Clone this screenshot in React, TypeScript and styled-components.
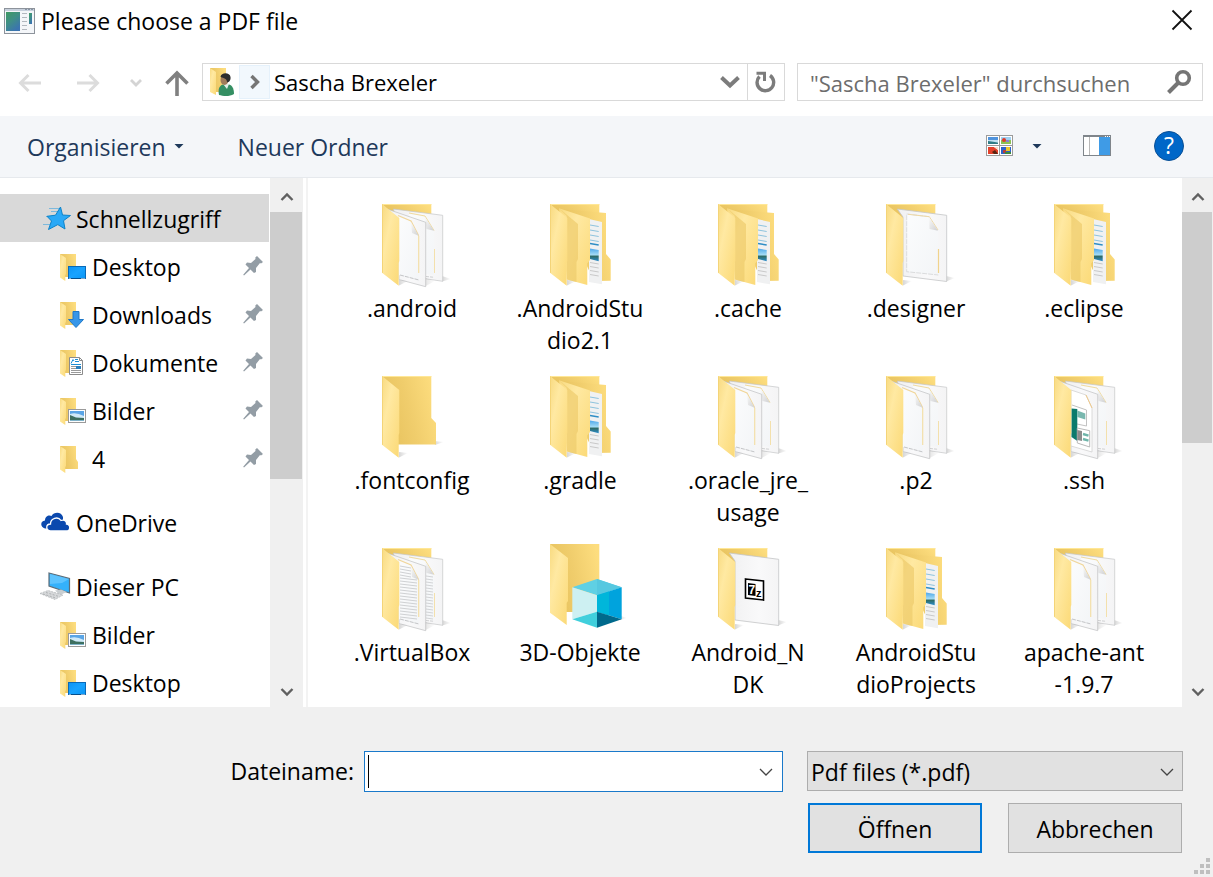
import React from "react";
import styled, { createGlobalStyle } from "styled-components";

const GlobalStyle = createGlobalStyle`
  *, *::before, *::after { box-sizing: border-box; }
  body { margin: 0; background: #fff; }
  body, button, input, select {
    font-family: "Open Sans", "Noto Sans", sans-serif;
    font-size: 23px;
    line-height: 32px;
    color: #000;
  }
  button { border: 0; padding: 0; background: none; }
  svg { display: block; flex: none; overflow: visible; }
`;

/* ---------- layout parts ---------- */

const Dialog = styled.div`
  min-height: 100vh;
  display: flex;
  flex-direction: column;
  overflow: hidden;
`;

const TitleBar = styled.header`
  display: flex;
  align-items: center;
  height: 42px;
  padding: 0 20px 0 4px;
  gap: 6px;
`;

const Title = styled.h1`
  flex: 1;
  margin: 0;
  font-size: 23px;
  font-weight: 400;
`;

const IconButton = styled.button<{ $width?: number; $before?: number }>`
  display: flex;
  flex: none;
  align-items: center;
  justify-content: center;
  width: ${(p) => (p.$width ? `${p.$width}px` : "auto")};
  height: 36px;
  margin-left: ${(p) => p.$before ?? 0}px;
`;

const NavBar = styled.nav`
  display: flex;
  align-items: center;
  height: 74px;
  padding: 6px 10px 0 16px;
`;

const HistoryButtons = styled.div`
  flex: none;
  display: flex;
  align-items: center;
  width: 186px;
  padding: 2px 0 0 2px;
`;

const AddressBar = styled.div`
  flex: 581 1 0;
  min-width: 0;
  display: flex;
  align-items: center;
  height: 38px;
  border: 1px solid #d9d9d9;
  margin-right: 12px;
`;

const UserFolderSlot = styled.span`
  width: 36px;
  padding-left: 6px;
`;

const CrumbArrow = styled.button`
  display: flex;
  align-items: center;
  justify-content: center;
  width: 31px;
  height: 34px;
  background: #f2f8fd;
  border: 1px solid #e5f1fb;
`;

const Crumb = styled.button`
  flex: 1;
  min-width: 0;
  padding-left: 4px;
  font-size: 22px;
  text-align: left;
  white-space: nowrap;
`;

const RefreshButton = styled(IconButton)`
  border-left: 1px solid #d9d9d9;
`;

const SearchBox = styled.div`
  flex: 382 1 0;
  min-width: 0;
  display: flex;
  align-items: center;
  height: 38px;
  padding: 0 10px 0 12px;
  border: 1px solid #d9d9d9;
`;

const SearchInput = styled.input`
  flex: 1;
  min-width: 0;
  height: 34px;
  padding: 2px 0 0;
  border: 0;
  outline: 0;
  background: transparent;
  font-size: 22px;
  &::placeholder { color: #6d6d6d; opacity: 1; }
`;

const Toolbar = styled.div`
  display: flex;
  align-items: center;
  height: 62px;
  padding: 0 29px 0 27px;
  background: #f4f6f9;
  border-bottom: 1px solid #e6e9ed;
`;

const Command = styled.button`
  display: flex;
  align-items: center;
  gap: 8px;
  margin-right: 54px;
  color: #1e395b;
  white-space: nowrap;
`;

const ToolbarTools = styled.div`
  display: flex;
  align-items: center;
  margin-left: auto;
  padding-bottom: 2px;
`;

const Body = styled.div`
  flex: 1;
  display: flex;
  align-items: stretch;
  min-height: 0;
`;

const Sidebar = styled.nav`
  flex: none;
  width: 270px;
  padding: 16px 1px 0 0;
`;

const Group = styled.ul`
  list-style: none;
  margin: 0 0 16px;
  padding: 0;
  &:last-child { margin-bottom: 0; }
`;

const SideItem = styled.button<{ $nested?: boolean; $selected?: boolean }>`
  display: flex;
  align-items: center;
  gap: 4px;
  width: 100%;
  height: 48px;
  padding: 0 6px 0 ${(p) => (p.$nested ? 56 : 40)}px;
  background: ${(p) => (p.$selected ? "#d9d9d9" : "transparent")};
  text-align: left;
`;

const SideLabel = styled.span`
  flex: 1;
  padding-top: 2px;
`;

const ScrollColumn = styled.div<{ $width: number }>`
  flex: none;
  display: flex;
  flex-direction: column;
  width: ${(p) => p.$width}px;
  background: #f0f0f0;
`;

const ScrollArrow = styled.button`
  display: flex;
  align-items: center;
  justify-content: center;
  height: 34px;
  padding-top: 3px;
`;

const ScrollTrack = styled.div`
  flex: 1;
`;

const ScrollThumb = styled.div<{ $share: number }>`
  height: ${(p) => p.$share}%;
  margin-right: 1px;
  background: #cdcdcd;
`;

const Splitter = styled.div`
  flex: none;
  width: 5px;
  border-right: 2px solid #f3f3f3;
`;

const FileArea = styled.main`
  flex: 1;
  min-width: 0;
  padding: 18px 14px 5px 20px;
`;

const FileGrid = styled.ul`
  list-style: none;
  margin: 0;
  padding: 0;
  display: grid;
  grid-template-columns: repeat(auto-fill, 168px);
  row-gap: 12px;
`;

const FileTile = styled.button`
  display: flex;
  flex-direction: column;
  align-items: center;
  width: 168px;
  height: 160px;
`;

const FileName = styled.span`
  white-space: pre;
  text-align: center;
`;

const Footer = styled.footer`
  background: #f0f0f0;
`;

const FooterForm = styled.form`
  display: grid;
  grid-template-columns: 354px minmax(0, 1fr) 376px;
  row-gap: 11px;
  padding: 44px 30px 0 0;
`;

const FieldLabel = styled.label`
  text-align: right;
  line-height: 41px;
`;

const ComboBox = styled.div`
  display: flex;
  align-items: center;
  height: 41px;
  margin: 0 24px 0 10px;
  padding-left: 3px;
  background: #fff;
  border: 1px solid #1a79ca;
`;

const TextCaret = styled.span`
  width: 1px;
  height: 33px;
  background: #000;
`;

const NameInput = styled.input`
  flex: 1;
  min-width: 0;
  height: 36px;
  padding: 0 2px;
  border: 0;
  outline: 0;
  background: transparent;
`;

const SelectWrap = styled.div`
  position: relative;
  height: 40px;
`;

const TypeSelect = styled.select`
  appearance: none;
  width: 100%;
  height: 40px;
  padding: 2px 40px 0 3px;
  background: #e1e1e1;
  border: 1px solid #adadad;
  border-radius: 0;
`;

const SelectArrow = styled.span`
  position: absolute;
  right: 8px;
  top: 14px;
  pointer-events: none;
`;

const Actions = styled.div`
  grid-column: 3;
  display: grid;
  grid-template-columns: 1fr 1fr;
  gap: 26px;
  padding: 0 1px;
`;

const ActionButton = styled.button<{ $primary?: boolean }>`
  height: 50px;
  padding-top: 2px;
  background: #e1e1e1;
  border: ${(p) => (p.$primary ? "2px solid #0078d7" : "1px solid #adadad")};
`;

const GripRow = styled.div`
  display: flex;
  justify-content: flex-end;
  padding: 5px 3px 3px;
`;

/* ---------- shared gradients ---------- */

const GradientSheet = styled.svg`
  position: absolute;
`;

const Gradients = () => (
  <GradientSheet width="0" height="0" aria-hidden="true">
    <defs>
      <linearGradient id="leaf" x1="0" y1="0" x2="1" y2="1">
        <stop offset="0" stopColor="#f8da80" />
        <stop offset="0.35" stopColor="#ffe9a2" />
        <stop offset="1" stopColor="#fbd976" />
      </linearGradient>
      <linearGradient id="back" x1="0" y1="0.6" x2="1" y2="0.3">
        <stop offset="0" stopColor="#e6c15c" />
        <stop offset="0.5" stopColor="#f0cd6c" />
        <stop offset="1" stopColor="#fddd7e" />
      </linearGradient>
      <linearGradient id="paper" x1="0" y1="0" x2="1" y2="0">
        <stop offset="0" stopColor="#f0f0f1" />
        <stop offset="0.6" stopColor="#f9f9fa" />
        <stop offset="1" stopColor="#f4f4f5" />
      </linearGradient>
      <linearGradient id="sheet" x1="0" y1="0" x2="1" y2="1">
        <stop offset="0" stopColor="#fbfcfd" />
        <stop offset="1" stopColor="#f3f5f7" />
      </linearGradient>
      <linearGradient id="fold" x1="0" y1="0" x2="1" y2="1">
        <stop offset="0" stopColor="#fafafa" />
        <stop offset="1" stopColor="#cfd0d2" />
      </linearGradient>
      <linearGradient id="photo" x1="0" y1="0" x2="0" y2="1">
        <stop offset="0" stopColor="#4fa8ea" />
        <stop offset="0.5" stopColor="#a5dcf5" />
        <stop offset="0.6" stopColor="#2f6a63" />
        <stop offset="1" stopColor="#2b8fd0" />
      </linearGradient>
      <linearGradient id="screen" x1="0" y1="0" x2="1" y2="1">
        <stop offset="0" stopColor="#0d94f4" />
        <stop offset="0.5" stopColor="#19a3ff" />
        <stop offset="1" stopColor="#0a96f5" />
      </linearGradient>
      <linearGradient id="app" x1="0" y1="0" x2="0.6" y2="1">
        <stop offset="0" stopColor="#3f9a63" />
        <stop offset="0.5" stopColor="#3f8f86" />
        <stop offset="1" stopColor="#3b74b0" />
      </linearGradient>
      <linearGradient id="shade" x1="0" y1="0" x2="1" y2="0">
        <stop offset="0" stopColor="#8a8a8a" stopOpacity="0.35" />
        <stop offset="1" stopColor="#8a8a8a" stopOpacity="0" />
      </linearGradient>
    </defs>
  </GradientSheet>
);

/* ---------- large folder icons ---------- */

type FolderKind = "papers" | "text" | "nested" | "single" | "empty" | "cube" | "zip" | "keys";

const FrontLeaf = () => (
  <>
    <path d="M35 84 L44 85 L35 89.5Z" fill="url(#shade)" />
    <path d="M18 8 L35.3 22 V65 L34.7 67 V89.7 L18 76.7Z" fill="url(#leaf)" />
    <path d="M18.5 8.5V76.8" stroke="#f4d478" strokeWidth="1" />
  </>
);

const BackPanel = () => (
  <>
    <path d="M18 8 H67.3 V22 H30Z" fill="url(#back)" />
    <path d="M18 8.5 H67.3" stroke="#ffe796" strokeWidth="1" />
  </>
);

const Lines = ({ x, y, w, count, gap, color, skew = 2 }: { x: number; y: number; w: number; count: number; gap: number; color: string; skew?: number }) => (
  <>
    {Array.from({ length: count }, (_, i) => (
      <path key={i} d={`M${x} ${y + i * gap} l${w} ${skew}`} stroke={color} strokeWidth="1" fill="none" />
    ))}
  </>
);

const Papers = ({ kind }: { kind: FolderKind }) => (
  <>
    <path d="M78 80 L87 83 L78 85.5Z" fill="url(#shade)" />
    <path d="M29.3 13 L78.7 19.3 V85.3 L50 81Z" fill="url(#paper)" stroke="#c4c5c7" strokeWidth="0.7" />
    <path d="M45 18 L61 20 L70 34 V79 L55 77Z" fill="url(#sheet)" />
    <path d="M45 17 L61 20 L70 34.5" stroke="#f0dba0" strokeWidth="1" fill="none" />
    <path d="M61 21 L62.5 33 L70 34.7Z" fill="url(#fold)" />
    <path d="M70.5 53 V77" stroke="#f3e0ac" strokeWidth="1" />
    <path d="M62 80.5 l8 0.8" stroke="#cfd0d2" strokeWidth="1" strokeDasharray="3 1" />
    {kind === "text" && <Lines x={62} y={36} w={7} count={15} gap={3} color="#d2d4d6" skew={1} />}
    <path d="M21 12.3 L61.7 26.3 V90.7 L35 83.5 V23Z" fill="url(#paper)" stroke="#bfc0c2" strokeWidth="0.7" />
    <path d="M61.7 82 L71 85 L61.7 90Z" fill="url(#shade)" opacity="0.6" />
    {kind === "keys" ? (
      <>
        <path d="M35 22 L50 27 L56 40 V84 L35 78Z" fill="#fff" stroke="#d2d2d2" strokeWidth="0.8" />
        <path d="M50 27 L56 40" stroke="#efc98a" strokeWidth="1" />
        <path d="M36 37 L50.5 42 V58 L41 56" fill="none" stroke="#c2c2c2" strokeWidth="1" />
        <path d="M35.5 40.5 L41.3 41 V73 L35.5 69Z" fill="#0b7a6c" />
        <path d="M41.3 42.5 L49.3 45.5 V51.5 L41.3 49Z" fill="#79b8af" />
        <path d="M41.3 60 L53.7 62.7 V79 L41.3 75Z" fill="#fff" stroke="#b9b9b9" strokeWidth="1" />
        <path d="M41.3 62 L46 63 V73 L41.3 72Z" fill="#8c8c8c" />
        <path d="M47 66 l5.5 1.6 M47 71 l5.5 1.6" stroke="#6fb5aa" strokeWidth="2.4" />
      </>
    ) : (
      <>
        <path d="M35 21 L47 25 L54.7 39.7 V85 L35 79Z" fill="url(#sheet)" />
        {kind === "text" && <Lines x={36} y={26} w={11} count={4} gap={3} color="#cfd1d3" />}
        {kind === "text" && <Lines x={36} y={38} w={17} count={14} gap={3} color="#cfd1d3" />}
        <path d="M34 19.5 L47 25 L54.7 39.7" stroke="#f0d69a" strokeWidth="1.2" fill="none" />
        <path d="M47 26 L48 37 L54.7 39.7Z" fill="url(#fold)" />
        <path d="M54.7 40 V77" stroke="#f3dfa8" strokeWidth="1.2" />
        <path d="M36 79 L55 84" stroke="#c4c5c7" strokeWidth="1" strokeDasharray="4 1" />
      </>
    )}
  </>
);

const NestedFolder = () => (
  <>
    <path d="M28 13 L74 17 V58 L78.7 63.5 V84.7 L62 85Z" fill="url(#back)" />
    <path d="M57 23 L70 26 V88.3 L57 86Z" fill="#f0f1f2" />
    <Lines x={58} y={29} w={8.7} count={4} gap={5} color="#8ec3dd" skew={1.5} />
    <path d="M58 47.5 l8.7 1.5" stroke="#2f8ec6" strokeWidth="1.6" />
    <path d="M58 52.5 L66.7 54 V65.3 L58 63Z" fill="url(#photo)" />
    <Lines x={58} y={66.5} w={8.7} count={4} gap={4} color="#c9c9c9" skew={1.5} />
    <path d="M27 12.3 L58 22.5 V64 L55.3 67.3 V89 L35 83.5Z" fill="url(#leaf)" />
    <path d="M27 12.3 L46 28 V63 L44.5 66 V86 L34.7 83.5 V20Z" fill="#ecca68" opacity="0.65" />
  </>
);

const SinglePaper = ({ kind }: { kind: FolderKind }) => (
  <>
    <path d="M78 80 L87 82 L78 85.5Z" fill="url(#shade)" />
    <path d="M29.3 13 L78.7 19.3 V85.5 L35 80V21Z" fill="url(#paper)" stroke="#c4c5c7" strokeWidth="0.8" />
    {kind === "single" ? (
      <>
        <path d="M38.7 18 L61.3 20.7 L70.3 34.7 V79 L38.7 75.7Z" fill="url(#sheet)" />
        <path d="M61.300 20.700 L38.700 18 V75.700 L70.300 79" stroke="#d3d4d6" strokeWidth="0.8" strokeDasharray="5 1" />
        <path d="M40 18.3 L61.3 20.7 L70 34" stroke="#eed9a6" strokeWidth="1" fill="none" />
        <path d="M61 21 L61.5 33 L70 34.7Z" fill="url(#fold)" />
        <path d="M70.5 53 V77" stroke="#f0d38c" strokeWidth="1.2" />
      </>
    ) : (
      <>
        <path d="M45.5 39 L63.5 41 V60 L45.5 58Z" fill="#fff" stroke="#000" strokeWidth="1.6" />
        <path d="M48 43 L55.5 44 V56 L48 55Z" fill="#000" />
        <text x="48.6" y="54.4" fontSize="12" fontWeight="700" fill="#fff" fontFamily="Liberation Sans, sans-serif">7</text>
        <text x="56" y="56.5" fontSize="11" fontWeight="700" fill="#000" fontFamily="Liberation Sans, sans-serif">z</text>
      </>
    )}
  </>
);

const FolderIcon = ({ kind }: { kind: FolderKind }) => (
  <svg width="96" height="96" viewBox="0 0 96 96" fill="none" aria-hidden="true">
    {kind === "cube" ? (
      <>
        <path d="M18 4 H67.3 V72 H34Z" fill="url(#back)" />
        <path d="M18 4 L36 18 V61 L34.7 63 V85 L18 72.7Z" fill="url(#leaf)" />
        <path d="M86 75 L95 78 L88 80Z" fill="url(#shade)" />
        <path d="M65 39 L89.7 47.3 L65 55.3 L40.3 47.3Z" fill="#5fd0e4" />
        <path d="M65 39 L89.7 47.3 L65 55.3Z" fill="#56c8e0" />
        <path d="M40.3 47.3 L65 55.3 V71.7 L40.3 79.3Z" fill="#cdf0f2" />
        <path d="M65 55.3 L89.7 47.3 V79.3 L65 71.7Z" fill="#00a3dd" />
        <path d="M65 55.3 L77 51.4 V75.4 L65 71.7Z" fill="#00b6da" />
        <path d="M65 71.7 V87.7 L40.3 79.3Z" fill="#40cfdc" />
        <path d="M65 71.7 L89.7 79.3 L65 87.7Z" fill="#00698c" />
      </>
    ) : kind === "empty" ? (
      <>
        <path d="M70 73 L80 74 L71 77Z" fill="url(#shade)" />
        <path d="M18 8 H67.3 V50 L72 55 V76.5 H34Z" fill="url(#back)" />
        <path d="M18 8.5 H67.3" stroke="#ffe796" />
        <FrontLeaf />
      </>
    ) : (
      <>
        <BackPanel />
        {kind === "nested" ? <NestedFolder /> : kind === "single" || kind === "zip" ? <SinglePaper kind={kind} /> : <Papers kind={kind} />}
        <FrontLeaf />
      </>
    )}
  </svg>
);

/* ---------- sidebar icons ---------- */

type SideKind = "star" | "desktop" | "downloads" | "documents" | "pictures" | "folder" | "cloud" | "pc";

const SideIcon = ({ kind }: { kind: SideKind }) => {
  if (kind === "star")
    return (
      <svg width="32" height="32" viewBox="0 0 32 32" fill="none" aria-hidden="true">
        <path d="M9 6.500 H20 M11 9.500 H18 M6 14.500 H9 M3 22.500 H10" stroke="#7db9dc" strokeWidth="1" />
        <path d="M20.500 5 L22.500 13 L30.500 13.500 L23.500 18.700 L25 27 L17.800 22.600 L8.500 27.500 L11.500 19 L7 14.300 L15.500 13.200Z" fill="#2aa9f7" stroke="#0c83c9" strokeWidth="1" />
      </svg>
    );
  if (kind === "cloud")
    return (
      <svg width="32" height="32" viewBox="0 0 32 32" aria-hidden="true">
        <path d="M5 22.500 C0 21 0 15 5 14.500 C5 10 9 8.500 11.500 10 C14 5.500 21.500 5.500 23 11 L23 22Z" fill="#0b49ae" />
        <path d="M10.500 25 C5.500 24.500 5.500 18 10.500 18 C10.500 12 18 10 21 14.500 C25 13 27 16 26.500 18 C31 18.500 30.500 25 26.500 25Z" fill="#0b49ae" stroke="#fff" strokeWidth="1.300" />
      </svg>
    );
  if (kind === "pc")
    return (
      <svg width="32" height="32" viewBox="0 0 32 32" aria-hidden="true">
        <path d="M9 3 L29.500 8.500 V23 L9 16Z" fill="#34b1fb" stroke="#5c6d79" strokeWidth="1.200" />
        <path d="M10 4 L29 9 L22 13 L10 14Z" fill="#6fcaff" opacity="0.700" />
        <path d="M15 20.500 L21 19.500 L27 22 L20 25Z" fill="#c9ced1" />
        <path d="M0 23.500 L8 20.500 L23 25 L15 29.500Z" fill="#d6d8da" stroke="#b4b8ba" strokeWidth="0.800" strokeDasharray="2 1" />
        <path d="M3 24 L16 28 M6 22.500 L19 26.500" stroke="#a4a8aa" strokeWidth="0.800" strokeDasharray="2 1.500" />
      </svg>
    );
  return (
    <svg width="32" height="32" viewBox="0 0 32 32" fill="none" aria-hidden="true">
      {kind === "folder" ? (
        <path d="M4 4 H20 V17 L22 20 V27 H9Z" fill="url(#back)" />
      ) : (
        <path d="M4 4 H20 V27 H9Z" fill="url(#back)" />
      )}
      <path d="M4 4 L10 8 V24 L9.300 25 V31 L4 27.500Z" fill="url(#leaf)" />
      {kind === "desktop" && (
        <>
          <rect x="12.500" y="16.500" width="17" height="12" fill="url(#screen)" stroke="#0a6ab8" />
          <path d="M13 28.500 H29" stroke="#064f8c" />
          <path d="M13.500 28.500 h1 M25.500 28.500 h1 M27.500 28.500 h1" stroke="#fff" />
        </>
      )}
      {kind === "downloads" && <path d="M17 13.500 H23 V21.500 H27.500 L20 29.500 L12.500 21.500 H17Z" fill="#3796e8" stroke="#1f78c8" strokeWidth="1" />}
      {kind === "documents" && (
        <>
          <path d="M13.500 11.500 H23.500 L26.500 14.500 V28.500 H13.500Z" fill="#fff" stroke="#8b8b8b" />
          <path d="M23.500 11.500 V14.500 H26.500" stroke="#8b8b8b" />
          <path d="M15 17.500 L17 13.500 L18 15 M19 13.500 H22 M19 15.500 H23 M15 18.500 H25" stroke="#1e8fd5" />
          <path d="M15 20.500 H20 M15 22.500 H20 M15 24.500 H25 M15 26.500 H25" stroke="#9a9a9a" />
          <rect x="20" y="20" width="5" height="3" fill="#2a7fbd" />
        </>
      )}
      {kind === "pictures" && (
        <>
          <rect x="12.500" y="15.500" width="17" height="13" fill="#fff" stroke="#9a9a9a" />
          <rect x="14" y="17" width="14" height="10" fill="#5aa5e6" />
          <path d="M14 20 Q20 18 28 22 V24 H14Z" fill="#cfe9f8" />
          <path d="M14 21 L20 23.500 L28 24 V27 H14Z" fill="#3d6f60" />
          <path d="M14 26 H28 V27 H14Z" fill="#7fb3c9" />
        </>
      )}
    </svg>
  );
};

const Pin = () => (
  <svg width="20" height="22" viewBox="0 0 20 22" aria-hidden="true">
    <path d="M14 1 L20 7 L18 8.500 L17 8 L13 13 V17 L11 18 L7.500 14.500 L1 20.500 L0.200 19.800 L6 13 L2.500 9.500 L4 7.500 L8 8 L12.500 4 L12.300 2.500Z" fill="#939da5" />
  </svg>
);

const Chevron = ({ up, thin }: { up?: boolean; thin?: boolean }) => (
  <svg width="16" height="14" viewBox="0 0 16 14" fill="none" aria-hidden="true">
    {thin ? (
      <path d="M2 4 L8 10 L14 4" stroke="#444" strokeWidth="1.300" />
    ) : (
      <path d={up ? "M2.500 10 L8 4.500 L13.500 10" : "M2.500 4 L8 9.500 L13.500 4"} stroke="#606060" strokeWidth="2.400" />
    )}
  </svg>
);

/* ---------- data ---------- */

type Place = { label: string; icon: SideKind; nested?: boolean; pinned?: boolean; selected?: boolean };

const placeGroups: Place[][] = [
  [
    { label: "Schnellzugriff", icon: "star", selected: true },
    { label: "Desktop", icon: "desktop", nested: true, pinned: true },
    { label: "Downloads", icon: "downloads", nested: true, pinned: true },
    { label: "Dokumente", icon: "documents", nested: true, pinned: true },
    { label: "Bilder", icon: "pictures", nested: true, pinned: true },
    { label: "4", icon: "folder", nested: true, pinned: true },
  ],
  [{ label: "OneDrive", icon: "cloud" }],
  [
    { label: "Dieser PC", icon: "pc" },
    { label: "Bilder", icon: "pictures", nested: true },
    { label: "Desktop", icon: "desktop", nested: true },
  ],
];

const files: { name: string; kind: FolderKind }[] = [
  { name: ".android", kind: "papers" },
  { name: ".AndroidStu\ndio2.1", kind: "nested" },
  { name: ".cache", kind: "nested" },
  { name: ".designer", kind: "single" },
  { name: ".eclipse", kind: "nested" },
  { name: ".fontconfig", kind: "empty" },
  { name: ".gradle", kind: "nested" },
  { name: ".oracle_jre_\nusage", kind: "papers" },
  { name: ".p2", kind: "papers" },
  { name: ".ssh", kind: "keys" },
  { name: ".VirtualBox", kind: "text" },
  { name: "3D-Objekte", kind: "cube" },
  { name: "Android_N\nDK", kind: "zip" },
  { name: "AndroidStu\ndioProjects", kind: "nested" },
  { name: "apache-ant\n-1.9.7", kind: "papers" },
];

const ScrollBar = ({ width, share }: { width: number; share: number }) => (
  <ScrollColumn $width={width}>
    <ScrollArrow type="button" aria-label="Nach oben"><Chevron up /></ScrollArrow>
    <ScrollTrack><ScrollThumb $share={share} /></ScrollTrack>
    <ScrollArrow type="button" aria-label="Nach unten"><Chevron /></ScrollArrow>
  </ScrollColumn>
);

export default function App() {
  return (
    <Dialog>
      <GlobalStyle />
      <Gradients />
      <TitleBar>
        <svg width="31" height="26" viewBox="0 0 31 26" aria-hidden="true">
          <rect x="0.500" y="0.500" width="30" height="25" fill="#f4f6f9" stroke="#8d939b" />
          <path d="M1 1 H30 V3 H1Z" fill="#c7d0dc" />
          <path d="M21 1.500 H29" stroke="#8794a5" strokeDasharray="2 1" />
          <rect x="2" y="4" width="14" height="19" fill="url(#app)" />
          <path d="M18 5.500 h5 M18 9.500 h5 M18 13.500 h5 M18 17.500 h5 M18 21.500 h5" stroke="#b2b8bf" />
          <rect x="25" y="5" width="3" height="11" fill="url(#app)" />
        </svg>
        <Title>Please choose a PDF file</Title>
        <IconButton type="button" aria-label="Schließen">
          <svg width="22" height="22" viewBox="0 0 22 22" aria-hidden="true">
            <path d="M1.500 0.500 L20.500 19.500 M20.500 0.500 L1.500 19.500" stroke="#111" strokeWidth="1.800" />
          </svg>
        </IconButton>
      </TitleBar>

      <NavBar>
        <HistoryButtons>
          <IconButton type="button" aria-label="Zurück">
            <svg width="24" height="20" viewBox="0 0 24 20" fill="none" aria-hidden="true">
              <path d="M23 10 H3 M10.500 2 L2.500 10 L10.500 18" stroke="#dcdcdc" strokeWidth="3" />
            </svg>
          </IconButton>
          <IconButton type="button" aria-label="Vorwärts" $before={34}>
            <svg width="24" height="20" viewBox="0 0 24 20" fill="none" aria-hidden="true">
              <path d="M1 10 H21 M13.500 2 L21.500 10 L13.500 18" stroke="#dcdcdc" strokeWidth="3" />
            </svg>
          </IconButton>
          <IconButton type="button" aria-label="Verlauf" $before={30}>
            <svg width="12" height="10" viewBox="0 0 12 10" fill="none" aria-hidden="true">
              <path d="M1 2 L6 7 L11 2" stroke="#d4d4d4" strokeWidth="2.800" />
            </svg>
          </IconButton>
          <IconButton type="button" aria-label="Übergeordneter Ordner" $before={23}>
            <svg width="24" height="26" viewBox="0 0 24 26" fill="none" aria-hidden="true">
              <path d="M12 26 V3 M1.500 13.500 L12 3 L22.500 13.500" stroke="#808080" strokeWidth="3.600" />
            </svg>
          </IconButton>
        </HistoryButtons>
        <AddressBar>
          <UserFolderSlot>
            <svg width="28" height="30" viewBox="0 0 28 30" aria-hidden="true">
              <path d="M1 1 H17 V25 H6Z" fill="url(#back)" />
              <path d="M1 1 L7 5 V28 L1 25Z" fill="url(#leaf)" />
              <path d="M10 28 C8 19 13 17 17 17 C23 17 25 21 25 27 C20 30 14 29 10 28Z" fill="#358f63" />
              <path d="M14 17 L20 17 L18 22Z" fill="#e3eee8" />
              <ellipse cx="15.500" cy="13" rx="4" ry="5" fill="#a07c5a" />
              <path d="M11.500 10 C12 5 21 5 21.500 10 C22 13 20 16 18 15 C18 12 15 11 11.500 10Z" fill="#2d2d2d" />
            </svg>
          </UserFolderSlot>
          <CrumbArrow type="button" aria-label="Unterordner">
            <svg width="12" height="16" viewBox="0 0 12 16" fill="none" aria-hidden="true">
              <path d="M2.500 2 L8.500 8 L2.500 14" stroke="#757575" strokeWidth="3.400" />
            </svg>
          </CrumbArrow>
          <Crumb type="button">Sascha Brexeler</Crumb>
          <IconButton type="button" aria-label="Vorherige Orte" $width={34}>
            <svg width="20" height="14" viewBox="0 0 20 14" fill="none" aria-hidden="true">
              <path d="M1.500 2.500 L10 10.500 L18.500 2.500" stroke="#7c7c7c" strokeWidth="4" />
            </svg>
          </IconButton>
          <RefreshButton type="button" aria-label="Aktualisieren" $width={37}>
            <svg width="22" height="22" viewBox="0 0 22 22" fill="none" aria-hidden="true">
              <path d="M4.500 5.500 A8.300 8.300 0 1 0 15 4.500" stroke="#7c7c7c" strokeWidth="3.400" />
              <path d="M1.500 2.200 H9.500 V10" stroke="#7c7c7c" strokeWidth="3" />
            </svg>
          </RefreshButton>
        </AddressBar>
        <SearchBox>
          <SearchInput type="search" aria-label="Durchsuchen" placeholder={'"Sascha Brexeler" durchsuchen'} />
          <svg width="26" height="26" viewBox="0 0 26 26" fill="none" aria-hidden="true">
            <circle cx="17" cy="9" r="6.300" stroke="#757575" strokeWidth="3.600" />
            <path d="M12.500 13.500 L2.500 23.500" stroke="#757575" strokeWidth="4" />
          </svg>
        </SearchBox>
      </NavBar>

      <Toolbar>
        <Command type="button">
          Organisieren
          <svg width="10" height="8" viewBox="0 0 10 8" aria-hidden="true">
            <path d="M0.500 1 H9.500 L5 5.500Z" fill="#1e395b" />
          </svg>
        </Command>
        <Command type="button">Neuer Ordner</Command>
        <ToolbarTools>
          <IconButton type="button" aria-label="Ansicht ändern" $width={28}>
            <svg width="28" height="22" viewBox="0 0 28 22" aria-hidden="true">
              <rect x="0.500" y="0.500" width="26" height="20" fill="#fff" stroke="#9b9b9b" />
              <path d="M13.500 0 V21 M0 10.500 H27" stroke="#9b9b9b" />
              <rect x="2" y="2" width="10" height="3" fill="#4f93dd" />
              <rect x="2" y="5" width="10" height="2" fill="#c2e2f2" />
              <path d="M2 6 L12 7.500 V9 H2Z" fill="#2f7c86" />
              <rect x="15" y="2" width="10" height="4" fill="#9fd0f2" />
              <rect x="15" y="5" width="10" height="4" fill="#8cc152" />
              <circle cx="18" cy="5" r="2" fill="#dd3b2a" />
              <rect x="20" y="5" width="3" height="2" fill="#8a7fd0" />
              <path d="M2 12 H8 L12 15 V19 H2Z" fill="#e3412b" />
              <path d="M8 12 H12 V15Z" fill="#f7d9c3" />
              <path d="M6 17 L9 15 L12 19 H8Z" fill="#5a2412" />
              <rect x="15" y="12" width="10" height="7" fill="#2e63c9" />
              <rect x="20" y="12" width="4" height="4" fill="#efc52c" />
              <rect x="17" y="15" width="3" height="3" fill="#b5403c" />
              <path d="M19 17 H25 V19 H19Z" fill="#3d8a3d" />
            </svg>
          </IconButton>
          <IconButton type="button" aria-label="Weitere Ansichten" $width={46}>
            <svg width="10" height="6" viewBox="0 0 10 6" aria-hidden="true">
              <path d="M0.500 1 H9.500 L5 5.500Z" fill="#1e395b" />
            </svg>
          </IconButton>
          <IconButton type="button" aria-label="Vorschaufenster" $width={74}>
            <svg width="28" height="22" viewBox="0 0 28 22" aria-hidden="true">
              <rect x="0.500" y="0.500" width="27" height="20" fill="#fff" stroke="#7f858b" />
              <path d="M0 1 H28" stroke="#7f858b" strokeWidth="2" />
              <path d="M22 1.500 H27" stroke="#fff" strokeDasharray="1 1" />
              <path d="M6.500 2 V20" stroke="#b9b9b9" />
              <rect x="16" y="2" width="11" height="18" fill="#3f9be6" />
            </svg>
          </IconButton>
          <IconButton type="button" aria-label="Hilfe" $width={30} $before={20}>
            <svg width="30" height="30" viewBox="0 0 30 30" aria-hidden="true">
              <circle cx="15" cy="15" r="14.500" fill="#0067c8" stroke="#0a4f94" />
              <text x="15" y="23" textAnchor="middle" fontSize="23" fill="#fff" fontFamily="Open Sans, sans-serif">?</text>
            </svg>
          </IconButton>
        </ToolbarTools>
      </Toolbar>

      <Body>
        <Sidebar aria-label="Orte">
          {placeGroups.map((group, g) => (
            <Group key={g}>
              {group.map((place) => (
                <li key={place.label}>
                  <SideItem type="button" $nested={place.nested} $selected={place.selected}>
                    <SideIcon kind={place.icon} />
                    <SideLabel>{place.label}</SideLabel>
                    {place.pinned && <Pin />}
                  </SideItem>
                </li>
              ))}
            </Group>
          ))}
        </Sidebar>
        <ScrollBar width={33} share={58} />
        <Splitter />
        <FileArea>
          <FileGrid>
            {files.map((file) => (
              <li key={file.name}>
                <FileTile type="button">
                  <FolderIcon kind={file.kind} />
                  <FileName>{file.name}</FileName>
                </FileTile>
              </li>
            ))}
          </FileGrid>
        </FileArea>
        <ScrollBar width={31} share={50} />
      </Body>

      <Footer>
        <FooterForm onSubmit={(e) => e.preventDefault()}>
          <FieldLabel htmlFor="file-name">Dateiname:</FieldLabel>
          <ComboBox>
            <TextCaret />
            <NameInput id="file-name" type="text" />
            <IconButton type="button" aria-label="Letzte Dateinamen" $width={32}><Chevron thin /></IconButton>
          </ComboBox>
          <SelectWrap>
            <TypeSelect aria-label="Dateityp">
              <option>Pdf files (*.pdf)</option>
            </TypeSelect>
            <SelectArrow><Chevron thin /></SelectArrow>
          </SelectWrap>
          <Actions>
            <ActionButton type="submit" $primary>Öffnen</ActionButton>
            <ActionButton type="button">Abbrechen</ActionButton>
          </Actions>
        </FooterForm>
        <GripRow>
          <svg width="16" height="16" viewBox="0 0 16 16" fill="#bfbfbf" aria-hidden="true">
            <path d="M12 0h4v4h-4z M6 6h4v4h-4z M12 6h4v4h-4z M0 12h4v4h-4z M6 12h4v4h-4z M12 12h4v4h-4z" />
          </svg>
        </GripRow>
      </Footer>
    </Dialog>
  );
}
